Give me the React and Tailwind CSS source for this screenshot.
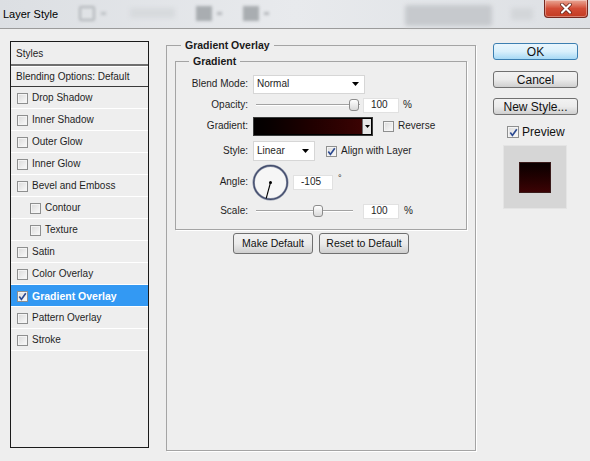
import React from 'react';

const STYLE_ITEMS = [
  { label: 'Drop Shadow' },
  { label: 'Inner Shadow' },
  { label: 'Outer Glow' },
  { label: 'Inner Glow' },
  { label: 'Bevel and Emboss' },
  { label: 'Contour', indent: true },
  { label: 'Texture', indent: true },
  { label: 'Satin' },
  { label: 'Color Overlay' },
  { label: 'Gradient Overlay', checked: true, active: true },
  { label: 'Pattern Overlay' },
  { label: 'Stroke' },
];

function Check({ checked, big, className = '' }) {
  return (
    <span
      className={`relative flex shrink-0 items-center justify-center border border-[#8e8f8f] bg-gradient-to-br from-[#dadada] to-[#fbfbfb] shadow-[inset_0_0_0_1px_#f4f4f4] ${big ? 'h-[12px] w-[12px]' : 'h-[11px] w-[11px]'} ${className}`}
    >
      {checked && (
        <svg width="9" height="9" viewBox="0 0 9 9">
          <path d="M1.3 4.6 L3.4 7.4 L7.8 1.2" fill="none" stroke="#2c4a91" strokeWidth="1.7" />
        </svg>
      )}
    </span>
  );
}

function Arrow() {
  return (
    <svg width="7" height="4" viewBox="0 0 7 4">
      <path d="M0 0 H7 L3.5 4 Z" fill="#000" />
    </svg>
  );
}

function StyleRow({ label, checked, indent, active }) {
  return (
    <div className={`flex h-[22px] items-center border-b border-white pt-[1px] ${active ? 'bg-[#3399f3]' : ''}`}>
      <Check checked={checked} className={indent ? 'ml-[19px]' : 'ml-[6px]'} />
      <span className={`ml-[4px] leading-none ${active ? 'text-[10.5px] font-bold text-white' : 'text-[10px] text-[#1e1e1e]'}`}>
        {label}
      </span>
    </div>
  );
}

function Label({ children }) {
  return <span className="w-[72px] shrink-0 text-right text-[10px] leading-none text-[#1e1e1e]">{children}</span>;
}

function Slider({ width, thumb }) {
  return (
    <div className="relative h-[13px] shrink-0" style={{ width }}>
      <div className="absolute left-0 right-0 top-[5px] h-[2px] border-t border-[#a3a3a3] bg-white" />
      <div
        className="absolute top-0 h-[12px] w-[10px] rounded-[3px] border border-[#8c8c8c] bg-gradient-to-b from-white to-[#d9d9d9]"
        style={{ left: thumb }}
      />
    </div>
  );
}

function NumBox({ value, width }) {
  return (
    <div
      className="flex h-[15px] shrink-0 items-center border border-[#e1e1e1] bg-white pl-[7px] text-[10px] leading-none text-[#1e1e1e]"
      style={{ width }}
    >
      {value}
    </div>
  );
}

function WinButton({ children, primary, className = '' }) {
  return (
    <button
      className={`flex items-center justify-center rounded-[3px] border leading-none text-[#111] ${primary ? 'border-[#3c7fb1] bg-gradient-to-b from-[#eaf6fd] via-[#d9f0fc] to-[#a7d9f5]' : 'border-[#707070] bg-gradient-to-b from-[#f2f2f2] via-[#ebebeb] to-[#cfcfcf]'} ${className}`}
    >
      {children}
    </button>
  );
}

export default function App() {
  return (
    <div className="h-[461px] w-[590px] overflow-hidden bg-[#eeeeee] font-['Liberation_Sans',Arial,sans-serif]">
      {/* title bar */}
      <div className="flex h-[29px] items-start border-b border-[#9b9b9b] bg-gradient-to-r from-[#dcdfe3] via-[#e8eaed] to-[#dde0e4]">
        <span className="ml-[3px] mt-[9px] text-[11px] leading-none text-black">Layer Style</span>
        {/* blurred toolbar behind glass */}
        <div className="ml-[21px] mt-[6px] flex items-center gap-[6px] blur-[1.5px]">
          <div className="h-[15px] w-[16px] rounded-[2px] border-2 border-[#b0b4b8]" />
          <div className="h-[3px] w-[5px] bg-[#bcc0c4]" />
        </div>
        <div className="ml-[24px] mt-[8px] h-[10px] w-[45px] rounded-[2px] bg-[#d7dadd] blur-[2px]" />
        <div className="ml-[21px] mt-[6px] flex items-center gap-[5px] blur-[1.5px]">
          <div className="h-[15px] w-[16px] bg-[#a9adb1]" />
          <div className="h-[3px] w-[5px] bg-[#b3b7bb]" />
        </div>
        <div className="ml-[21px] mt-[6px] flex items-center gap-[5px] blur-[1.5px]">
          <div className="h-[15px] w-[16px] bg-[#a9adb1]" />
          <div className="h-[3px] w-[5px] bg-[#b3b7bb]" />
        </div>
        <div className="ml-[136px] mt-[5px] h-[21px] w-[87px] rounded-[3px] bg-[#c6c9cd] blur-[2px]" />
        <div className="ml-[19px] mt-[8px] h-[12px] w-[22px] rounded-[2px] bg-[#d3d6d9] blur-[2px]" />
        <div className="ml-auto mr-[2px] flex h-[18px] w-[44px] items-center justify-center rounded-b-[4px] border border-t-0 border-[#76281f] bg-gradient-to-b from-[#e9a796] via-[#d24c36] to-[#c23b22] shadow-[inset_0_0_0_1px_rgba(255,255,255,0.35)]">
          <svg width="14" height="11" viewBox="0 0 14 11">
            <path d="M3 1.5 L11 9.5 M11 1.5 L3 9.5" stroke="#5a1d14" strokeWidth="3.6" strokeLinecap="round" />
            <path d="M3 1.5 L11 9.5 M11 1.5 L3 9.5" stroke="#ffffff" strokeWidth="2.2" strokeLinecap="round" />
          </svg>
        </div>
      </div>

      <div className="flex items-start">
        {/* styles list */}
        <div className="ml-[10px] mt-[12px] h-[407px] w-[139px] border border-[#1a1a1a]">
          <div className="flex h-[24px] items-center border-b-2 border-[#6f6f6f] pl-[5px] pt-[1px] text-[10px] leading-none text-[#1e1e1e]">
            Styles
          </div>
          <div className="h-px bg-white" />
          <div className="flex h-[20px] items-center border-b border-[#3a3a3a] pl-[5px] pt-[1px] text-[10px] leading-none text-[#1e1e1e]">
            Blending Options: Default
          </div>
          {STYLE_ITEMS.map((item) => (
            <StyleRow key={item.label} {...item} />
          ))}
        </div>

        {/* gradient overlay settings */}
        <fieldset className="ml-[17px] mt-[10px] h-[412px] w-[310px] border border-[#a4a4a4] shadow-[1px_1px_0_#ffffff]">
          <legend className="ml-[14px] px-[4px] text-[10.5px] font-bold leading-[13px] text-[#1a1a1a]">Gradient Overlay</legend>

          <fieldset className="mx-[8px] mt-[3px] border border-[#a4a4a4] pb-[9px] pt-[6px] shadow-[1px_1px_0_#ffffff]">
            <legend className="ml-[13px] px-[4px] text-[10.5px] font-bold leading-[13px] text-[#1a1a1a]">Gradient</legend>

            <div className="flex h-[20px] items-center">
              <Label>Blend Mode:</Label>
              <div className="ml-[5px] flex h-[19px] w-[112px] items-center justify-between border border-[#d6d6d6] bg-white pl-[3px] pr-[5px]">
                <span className="text-[10px] leading-none text-[#1e1e1e]">Normal</span>
                <Arrow />
              </div>
            </div>

            <div className="mt-[2px] flex h-[18px] items-center">
              <Label>Opacity:</Label>
              <div className="ml-[8px]">
                <Slider width={104} thumb={93} />
              </div>
              <div className="ml-[3px]">
                <NumBox value="100" width={36} />
              </div>
              <span className="ml-[4px] text-[10px] leading-none text-[#1e1e1e]">%</span>
            </div>

            <div className="mt-[2px] flex h-[20px] items-center">
              <Label>Gradient:</Label>
              <div className="ml-[5px] flex h-[19px] w-[120px] border border-[#3c3c3c] bg-black p-px">
                <div className="flex-1 bg-gradient-to-r from-[#030000] via-[#1e0000] to-[#3b0303]" />
                <div className="flex w-[9px] items-center justify-center border-l border-[#6f6f6f] bg-[#e6e6e6]">
                  <svg width="5" height="3" viewBox="0 0 5 3">
                    <path d="M0 0 H5 L2.5 3 Z" fill="#000" />
                  </svg>
                </div>
              </div>
              <Check className="ml-[10px]" />
              <span className="ml-[4px] text-[10px] leading-none text-[#1e1e1e]">Reverse</span>
            </div>

            <div className="mt-[4px] flex h-[22px] items-center">
              <Label>Style:</Label>
              <div className="ml-[5px] flex h-[20px] w-[62px] items-center justify-between border border-[#d6d6d6] bg-white pl-[3px] pr-[5px]">
                <span className="text-[10px] leading-none text-[#1e1e1e]">Linear</span>
                <Arrow />
              </div>
              <Check checked className="ml-[11px]" />
              <span className="ml-[4px] text-[10px] leading-none text-[#1e1e1e]">Align with Layer</span>
            </div>

            <div className="mt-[2px] flex h-[36px] items-center">
              <Label>Angle:</Label>
              <svg className="ml-[4px]" width="37" height="37" viewBox="0 0 37 37">
                <circle cx="18.5" cy="18.5" r="16.8" fill="#f6f6f6" stroke="#8a91a6" strokeWidth="2.4" />
                <circle cx="18.5" cy="18.5" r="16.8" fill="none" stroke="#404a6a" strokeWidth="1.2" />
                <line x1="18.5" y1="18.5" x2="14.2" y2="34.4" stroke="#000" strokeWidth="1.1" />
                <circle cx="18.5" cy="18.5" r="1.5" fill="#000" />
              </svg>
              <div className="ml-[4px]">
                <NumBox value="-105" width={40} />
              </div>
              <span className="mb-[7px] ml-[5px] text-[9px] leading-none text-[#1e1e1e]">°</span>
            </div>

            <div className="mt-[2px] flex h-[18px] items-center">
              <Label>Scale:</Label>
              <div className="ml-[8px]">
                <Slider width={97} thumb={57} />
              </div>
              <div className="ml-[10px]">
                <NumBox value="100" width={36} />
              </div>
              <span className="ml-[5px] text-[10px] leading-none text-[#1e1e1e]">%</span>
            </div>
          </fieldset>

          <div className="mt-[3px] flex justify-center gap-[6px]">
            <WinButton className="h-[21px] w-[80px] text-[10.5px]">Make Default</WinButton>
            <WinButton className="h-[21px] w-[90px] text-[10.5px]">Reset to Default</WinButton>
          </div>
        </fieldset>

        {/* dialog buttons */}
        <div className="ml-[17px] mt-[14px] flex w-[85px] flex-col">
          <WinButton primary className="h-[17px] w-[85px] text-[12px]">OK</WinButton>
          <WinButton className="mt-[11px] h-[17px] w-[85px] text-[12px]">Cancel</WinButton>
          <WinButton className="mt-[10px] h-[17px] w-[85px] text-[12px]">New Style...</WinButton>
          <div className="mt-[11px] flex h-[12px] items-center">
            <Check checked big className="ml-[14px]" />
            <span className="ml-[3px] text-[12px] leading-none text-[#111]">Preview</span>
          </div>
          <div className="ml-[10px] mt-[7px] flex h-[64px] w-[64px] justify-center border border-[#e4e4e4] bg-[#d6d6d6] pt-[16px]">
            <div className="h-[31px] w-[32px] border border-[#3a1a1a] bg-gradient-to-b from-[#0a0000] to-[#3c0305]" />
          </div>
        </div>
      </div>
    </div>
  );
}
